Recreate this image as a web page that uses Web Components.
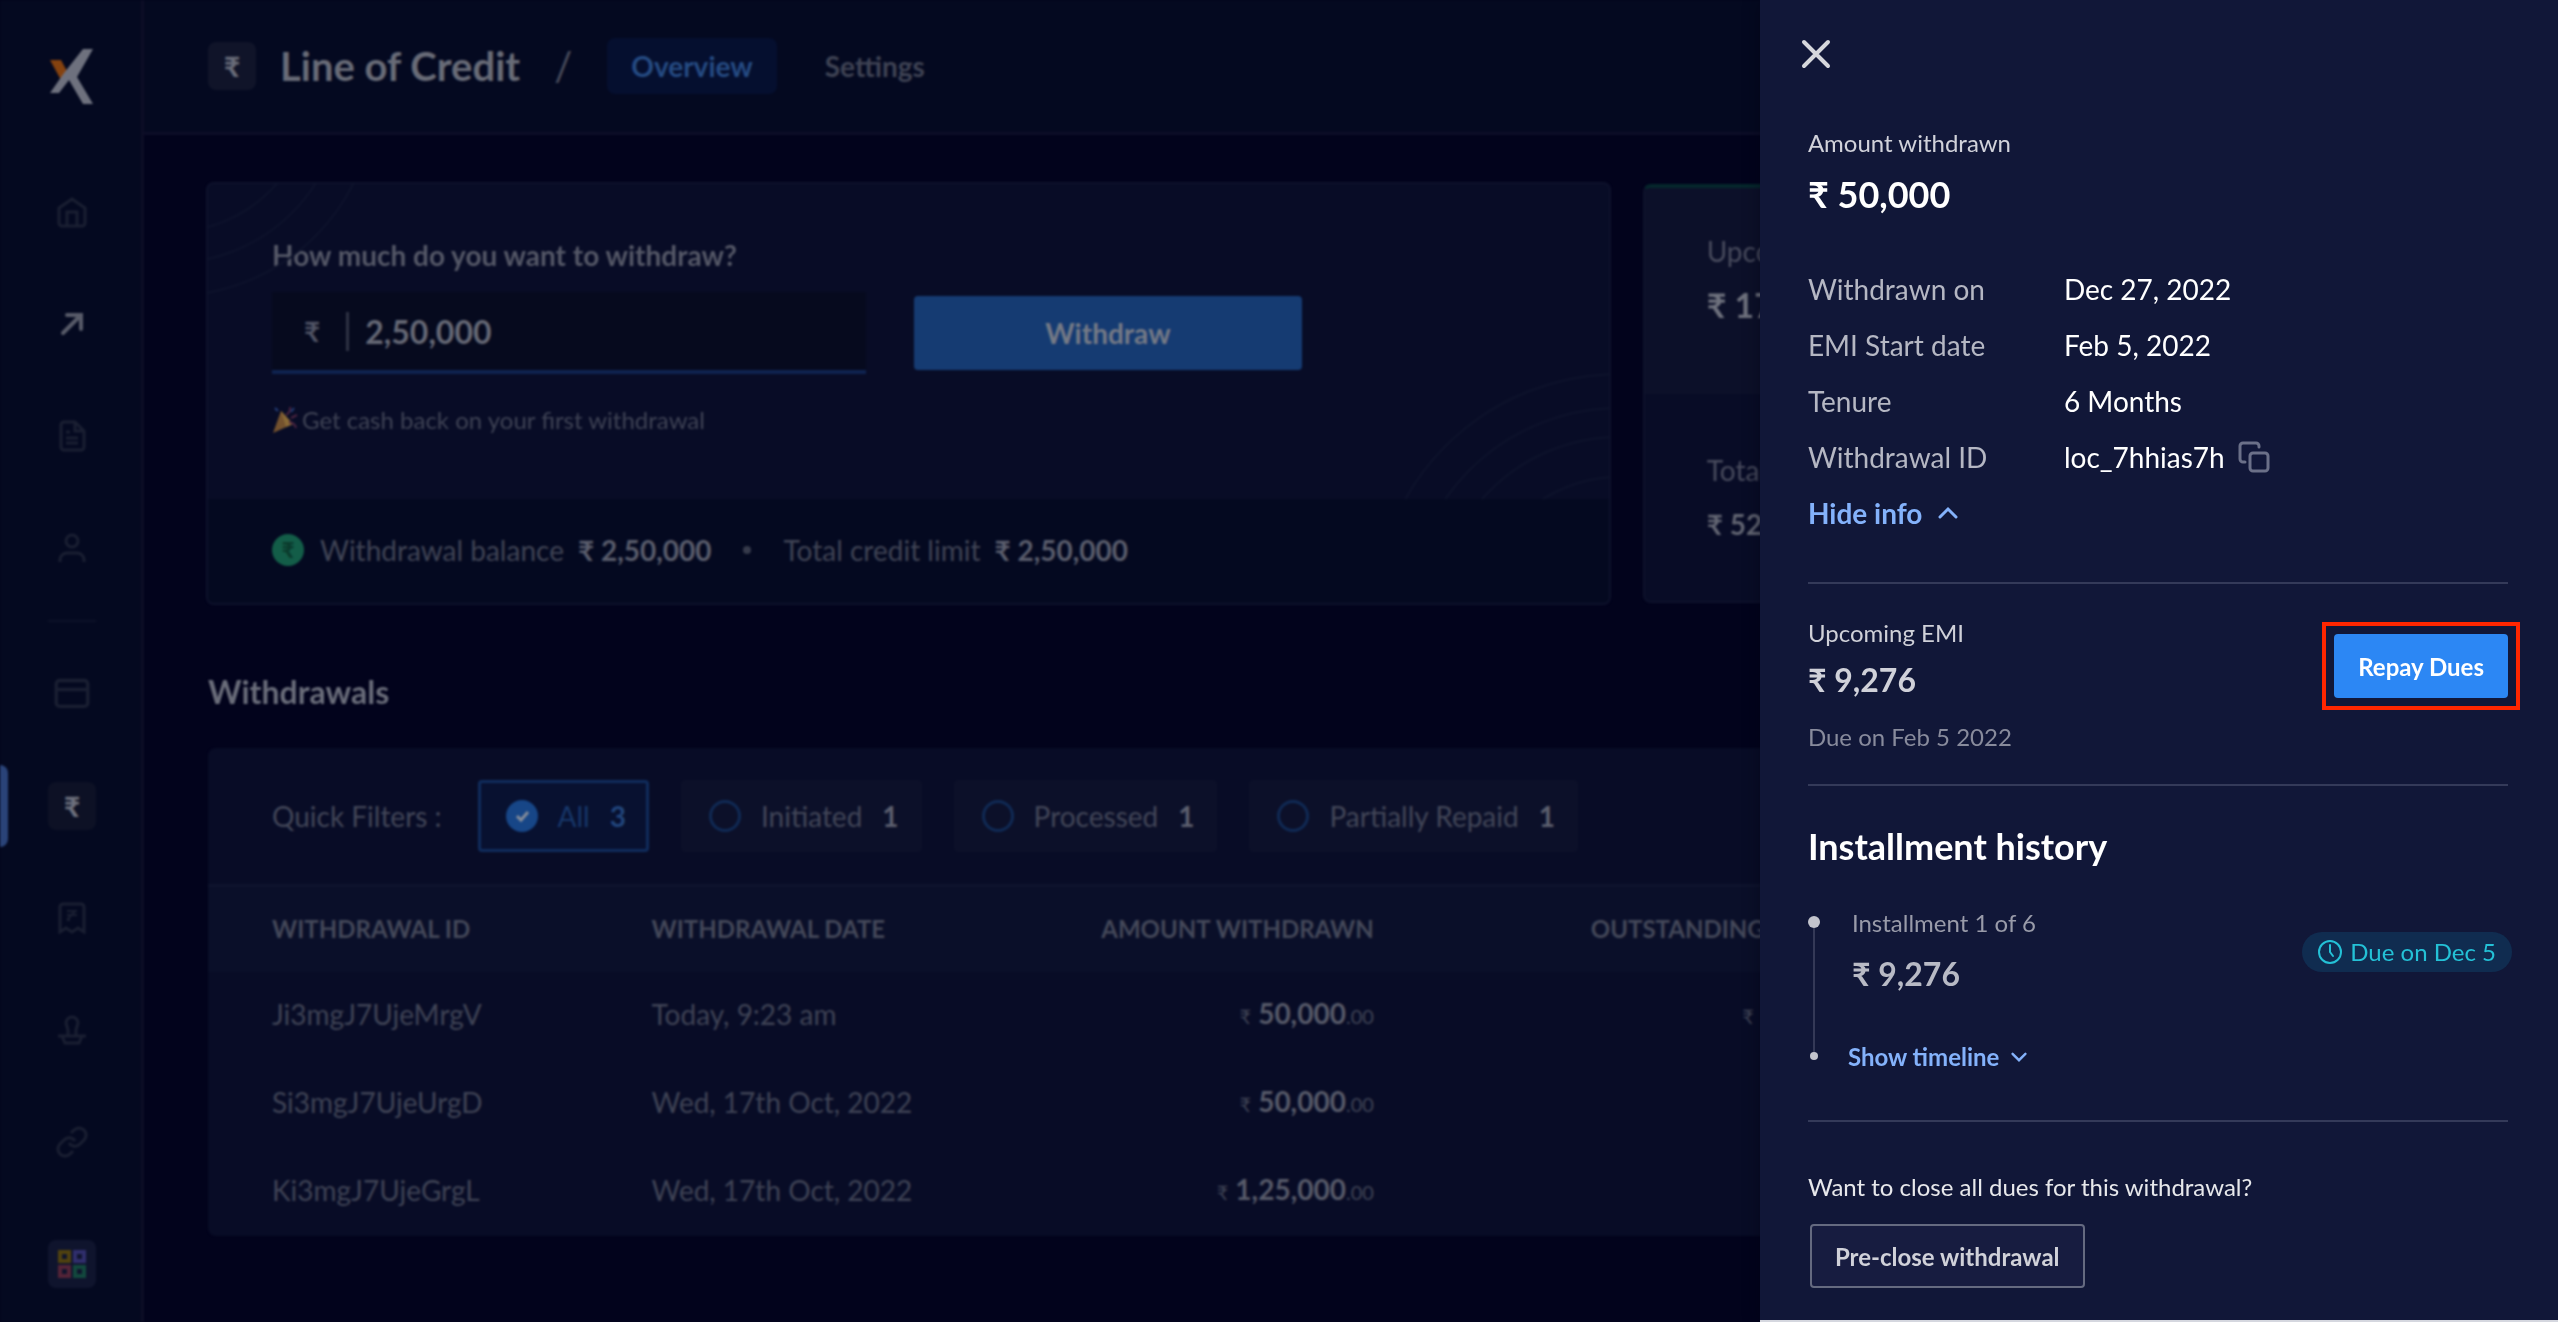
<!DOCTYPE html>
<html lang="en">
<head>
<meta charset="utf-8">
<meta name="viewport" content="width=device-width, initial-scale=1">
<title>Line of Credit</title>
<style>
html, body { margin: 0; }
body {
  background-color: #02031c;
  color: #fff;
  font: 28px/40px Lato, "Liberation Sans", sans-serif;
  overflow: hidden;
}
</style>
</head>
<body>
<credit-app>
  <side-nav slot="nav"></side-nav>
  <page-header slot="header">Line of Credit</page-header>
  <withdraw-card slot="summary"></withdraw-card>
  <dues-card slot="summary"></dues-card>
  <withdrawal-list>
    <quick-filters slot="filters"></quick-filters>
  </withdrawal-list>
</credit-app>

<detail-drawer>
  <section-block>
    <span slot="label">Amount withdrawn</span>
    <span slot="title">₹ 50,000</span>
    <info-row label="Withdrawn on">Dec 27, 2022</info-row>
    <info-row label="EMI Start date">Feb 5, 2022</info-row>
    <info-row label="Tenure">6 Months</info-row>
    <info-row label="Withdrawal ID" copy>loc_7hhias7h</info-row>
    <toggle-link open>Hide info</toggle-link>
  </section-block>
  <upcoming-emi></upcoming-emi>
  <installment-history></installment-history>
  <preclose-block></preclose-block>
</detail-drawer>

<script>
const define = (tagName, html, setup) => {
  const template = document.createElement('template')
  template.innerHTML = html

  customElements.define(tagName, class extends HTMLElement {
    constructor () {
      super()
      this.attachShadow({ mode: 'open' })
      this.shadowRoot.appendChild(template.content.cloneNode(true))
    }

    connectedCallback () {
      if (setup) setup(this, this.shadowRoot)
    }
  })
}

// Page frame behind the drawer
define('credit-app', `
<style>
:host {
  display: flex;
  filter: blur(1px);
  min-height: 100vh;
}
.page { display: flex; flex: 1; flex-direction: column; min-width: 0; }
main { padding: 47px 64px 0; }
.summary { display: grid; gap: 32px; grid-template-columns: 1.65fr 1fr; margin-left: -2px; }
</style>
<slot name="nav"></slot>
<div class="page">
  <slot name="header"></slot>
  <main>
    <div class="summary"><slot name="summary"></slot></div>
    <slot></slot>
  </main>
</div>
`)

define('side-nav', `
<style>
:host {
  background-color: #040920;
  border-right: 3px solid #0d0d26;
  box-sizing: border-box;
  display: block;
  flex: none;
  width: 144px;
}
.logo { display: block; height: 60px; margin: 47px auto 81px 49px; width: 46px; }
nav { display: flex; flex-direction: column; gap: 64px; }
a {
  align-items: center;
  border-radius: 8px;
  color: #1a1f32;
  display: flex;
  height: 48px;
  justify-content: center;
  margin-left: 48px;
  width: 48px;
}
a svg { fill: none; height: 32px; stroke: currentColor; stroke-width: 3; width: 32px; }
a.bright { color: #585b69; }
a.active { background-color: #0d1125; color: #6c6f7c; font-size: 28px; font-weight: 900; position: relative; text-decoration: none; }
a.active::before {
  background-color: #2a4378;
  border-radius: 0 8px 8px 0;
  content: '';
  height: 82px;
  left: -48px;
  position: absolute;
  top: -17px;
  width: 8px;
}
a.apps { background-color: #0f142d; margin-top: 10px; }
hr { background-color: #0d1228; border: 0; height: 2px; margin: 48px 0 48px 48px; width: 48px; }
</style>
<svg class="logo" viewBox="0 0 46 60">
  <path d="M1 13h11l7 13-6 9z" fill="#85420f"/>
  <path d="M34 2h10L28 30l16 27H34L20 33 10 46H1l14-20z" fill="#6e717e"/>
</svg>
<nav aria-label="Primary">
  <a href="#home" aria-label="Home"><svg viewBox="0 0 32 32"><path d="M3 12L16 3l13 9v15a3 3 0 0 1-3 3H6a3 3 0 0 1-3-3z"/><path d="M11 29V16h10v13" /></svg></a>
  <a href="#payouts" class="bright" aria-label="Payouts"><svg viewBox="0 0 32 32" stroke-linecap="round"><path d="M7 25L24 8M11 7h14v14" style="stroke-width: 4"/></svg></a>
  <a href="#invoices" aria-label="Invoices"><svg viewBox="0 0 32 32"><path d="M19 2H8a3 3 0 0 0-3 3v22a3 3 0 0 0 3 3h17a3 3 0 0 0 3-3V11zM19 2v9h9M10 12h4M10 18h12M10 23h12"/></svg></a>
  <a href="#contacts" aria-label="Contacts"><svg viewBox="0 0 32 32"><circle cx="16" cy="9" r="6"/><path d="M4 30v-2a7 7 0 0 1 7-7h10a7 7 0 0 1 7 7v2"/></svg></a>
</nav>
<hr>
<nav aria-label="Banking">
  <a href="#cards" aria-label="Cards"><svg viewBox="0 0 32 32" style="width: 36px; height: 36px"><rect x="2" y="4" width="28" height="23" rx="3"/><path d="M2 12h28"/></svg></a>
  <a href="#credit" class="active" aria-label="Line of credit">₹</a>
  <a href="#tax" aria-label="Tax payments"><svg viewBox="0 0 32 32"><path d="M4 30V5a3 3 0 0 1 3-3h18a3 3 0 0 1 3 3v25l-6-4-6 4-6-4z"/><path d="M11 9h10M11 13h10M11 18l8-9M11 18h3" stroke-width="2"/></svg></a>
  <a href="#approvals" aria-label="Approvals"><svg viewBox="0 0 32 32"><path d="M12 22v-6l-2-7a6 6 0 0 1 12 0l-2 7v6M2 22h28M6 22l3 7h14l3-7"/></svg></a>
  <a href="#links" aria-label="Payout links"><svg viewBox="0 0 32 32"><path d="M13 17a7 7 0 0 0 11 1l4-4a7 7 0 0 0-10-10l-3 3"/><path d="M19 15a7 7 0 0 0-11-1l-4 4a7 7 0 0 0 10 10l3-3"/></svg></a>
  <a href="#apps" class="apps" aria-label="All apps"><svg viewBox="0 0 32 32" style="stroke-width: 4"><path d="M4 4h9v9H4z" stroke="#51420f"/><path d="M19 4h9v9h-9z" stroke="#302e6c"/><path d="M4 19h9v9H4z" stroke="#542337"/><path d="M19 19h9v9h-9z" stroke="#12483d"/></svg></a>
</nav>
`)

define('page-header', `
<style>
:host {
  align-items: center;
  background-color: #040920;
  border-bottom: 3px solid #0d0d28;
  box-sizing: border-box;
  display: flex;
  height: 135px;
  padding: 0 64px;
}
.badge {
  background-color: #101429;
  border-radius: 8px;
  color: #686b78;
  flex: none;
  font-weight: 900;
  height: 48px;
  line-height: 48px;
  text-align: center;
  width: 48px;
}
h1 { color: #686b77; font-size: 40px; font-weight: 700; line-height: 48px; margin: 0 0 0 24px; }
.slash { color: #484b5b; font-size: 40px; margin: 0 35px 0 34px; }
nav { display: flex; gap: 24px; }
a { border-radius: 8px; color: #3f4354; font-weight: 700; padding: 8px 24px; text-decoration: none; }
a[aria-current] { background-color: #050f2f; color: #254b83; }
</style>
<span class="badge">₹</span>
<h1><slot></slot></h1>
<span class="slash">/</span>
<nav>
  <a href="#overview" aria-current="page">Overview</a>
  <a href="#settings">Settings</a>
</nav>
`)

define('withdraw-card', `
<style>
:host {
  background-color: #080c26;
  border: 2px solid #0e122c;
  border-radius: 8px;
  display: block;
  overflow: hidden;
}
form { padding: 51px 64px 63px; position: relative; }
.arcs { fill: none; position: absolute; stroke: #0e132c; stroke-width: 2; }
.top { left: 0; top: 0; }
.bottom { bottom: 0; right: 0; }
label { color: #555867; display: block; font-weight: 700; }
.row { align-items: center; display: flex; gap: 48px; margin: 17px 0 30px; position: relative; }
.field {
  align-items: center;
  background-color: #060a1e;
  border-bottom: 4px solid #0f2350;
  box-sizing: border-box;
  color: #505364;
  display: flex;
  flex: 0 1 594px;
  height: 82px;
  padding: 0 32px;
}
.field span { font-weight: 700; }
input {
  background: none;
  border: 0;
  border-left: 3px solid #2e3243;
  color: #656875;
  flex: 1;
  font: 700 32px/32px Lato, sans-serif;
  margin-left: 26px;
  min-width: 0;
  outline: none;
  padding: 0 0 0 16px;
}
button {
  background-color: #153b72;
  border: 0;
  border-radius: 4px;
  color: #757a86;
  flex: 0 1 388px;
  font: 700 28px/40px Lato, sans-serif;
  height: 74px;
}
.offer { align-items: center; color: #3f4355; display: flex; font-size: 24px; gap: 4px; line-height: 32px; margin: 0; }
footer {
  align-items: center;
  background-color: #040920;
  box-sizing: border-box;
  color: #404455;
  display: flex;
  height: 104px;
  padding: 0 64px 2px;
}
.coin { background-color: #135d48; border-radius: 50%; color: #0a3a2c; font-size: 22px; font-weight: 900; height: 32px; line-height: 32px; margin-right: 16px; text-align: center; width: 32px; }
b { color: #5a5d6c; margin-left: 14px; }
.dot { background-color: #363a4b; border-radius: 50%; height: 8px; margin: 0 32px; width: 8px; }
</style>
<form>
  <svg class="arcs top" width="200" height="160"><circle cx="-37" cy="-92" r="140"/><circle cx="-37" cy="-92" r="171"/><circle cx="-37" cy="-92" r="204"/></svg>
  <svg class="arcs bottom" width="240" height="140"><circle cx="250" cy="260" r="245"/><circle cx="250" cy="260" r="211"/><circle cx="250" cy="260" r="182"/><circle cx="250" cy="260" r="142"/></svg>
  <label for="amount">How much do you want to withdraw?</label>
  <div class="row">
    <div class="field"><span>₹</span><input id="amount" type="text" inputmode="numeric" value="2,50,000"></div>
    <button type="button">Withdraw</button>
  </div>
  <p class="offer">
    <svg width="26" height="28" viewBox="0 0 26 28"><path d="M9 5l12 13L1 27z" fill="#74522e"/><path d="M9 5l12 13-7 3z" fill="#8a6a36"/><path d="M14 9q5-3 4-8M19 12l6-3M17 16q6 1 7 6" fill="none" stroke="#4c2440" stroke-width="2"/><path d="M3 2l3 3M22 2l-3 4" stroke="#243f78" stroke-width="2"/></svg>
    Get cash back on your first withdrawal
  </p>
</form>
<footer>
  <span class="coin">₹</span>
  <span>Withdrawal balance</span><b>₹ 2,50,000</b>
  <span class="dot"></span>
  <span>Total credit limit</span><b>₹ 2,50,000</b>
</footer>
`)

define('dues-card', `
<style>
:host {
  background-color: #080c26;
  border: 2px solid #0e122c;
  border-radius: 8px;
  border-top: 4px solid #05272c;
  box-sizing: border-box;
  color: #484b5d;
  display: block;
  margin: 2px 0;
  overflow: hidden;
}
div { padding: 43px 62px 0; }
.next { background-color: #0c1029; box-sizing: border-box; height: 206px; }
.total { padding-top: 56px; }
p { margin: 0 0 14px; }
b { color: #626572; display: block; font-size: 28px; }
.next b { color: #6e717d; font-size: 34px; }
</style>
<div class="next"><p>Upcoming</p><b>₹ 17</b></div>
<div class="total"><p>Total</p><b>₹ 52</b></div>
`)

define('quick-filters', `
<style>
:host { align-items: center; display: flex; gap: 32px; padding: 32px 64px; }
label {
  align-items: center;
  background-color: #0c1029;
  border: 3px solid #0c1029;
  border-radius: 4px;
  box-sizing: border-box;
  color: #424658;
  display: flex;
  gap: 20px;
  height: 72px;
  padding: 0 20px 0 25px;
}
label:has(:checked) { background-color: #081130; border-color: #102c5c; color: #17376a; }
b { color: #5c5f6e; }
:checked ~ b { color: #21457c; }
input {
  appearance: none;
  border: 3px solid #102a55;
  border-radius: 50%;
  box-sizing: border-box;
  height: 32px;
  margin: 0;
  width: 32px;
}
input:checked {
  background: #174687 url("data:image/svg+xml,%3Csvg xmlns='http://www.w3.org/2000/svg' viewBox='0 0 26 26'%3E%3Cpath d='M8 13l4 4 7-8' fill='none' stroke='%23848c9a' stroke-width='3'/%3E%3C/svg%3E") center;
  border-color: #174687;
}
.title { color: #424658; margin-right: 4px; }
</style>
<span class="title">Quick Filters :</span>
<label><input type="radio" name="status" checked><span>All</span><b>3</b></label>
<label><input type="radio" name="status"><span>Initiated</span><b>1</b></label>
<label><input type="radio" name="status"><span>Processed</span><b>1</b></label>
<label><input type="radio" name="status"><span>Partially Repaid</span><b>1</b></label>
`)

define('withdrawal-list', `
<style>
h2 { color: #6a6d7a; font-size: 32px; line-height: 40px; margin: 67px 0 36px; }
section { background-color: #080c26; border-radius: 8px; overflow: hidden; }
table { border-collapse: collapse; color: #3f4355; table-layout: fixed; width: 100%; }
tr { height: 88px; }
th, td { padding: 0; text-align: left; white-space: nowrap; }
thead tr { background-color: #0a0f29; box-shadow: inset 0 3px #0e132d; }
th { color: #444859; font-size: 24px; font-weight: 700; padding-top: 2px; }
td { padding-bottom: 4px; }
th:first-child, td:first-child { padding-left: 64px; }
.amount { text-align: right; }
.outstanding { padding-left: 217px; }
small { font-size: 20px; }
b { color: #575a69; }
</style>
<h2>Withdrawals</h2>
<section>
  <slot name="filters"></slot>
  <table>
    <colgroup><col style="width: 19.4%"><col style="width: 15.3%"><col style="width: 16.3%"><col style="width: 22%"><col></colgroup>
    <thead>
      <tr><th>WITHDRAWAL ID</th><th>WITHDRAWAL DATE</th><th class="amount">AMOUNT WITHDRAWN</th><th class="outstanding">OUTSTANDING</th><th></th></tr>
    </thead>
    <tbody>
      <tr><td>Ji3mgJ7UjeMrgV</td><td>Today, 9:23 am</td><td class="amount"><small>₹</small> <b>50,000</b><small>.00</small></td><td class="amount"><small>₹</small> <b>50,000</b><small>.00</small></td><td></td></tr>
      <tr><td>Si3mgJ7UjeUrgD</td><td>Wed, 17th Oct, 2022</td><td class="amount"><small>₹</small> <b>50,000</b><small>.00</small></td><td></td><td></td></tr>
      <tr><td>Ki3mgJ7UjeGrgL</td><td>Wed, 17th Oct, 2022</td><td class="amount"><small>₹</small> <b>1,25,000</b><small>.00</small></td><td></td><td></td></tr>
    </tbody>
  </table>
</section>
`)

// Drawer on the right edge, over the page
define('detail-drawer', `
<style>
:host {
  background-color: #111738;
  border-bottom: 2px solid #d5d7df;
  bottom: 0;
  box-shadow: 0 0 16px rgba(0, 0, 16, 0.4);
  box-sizing: border-box;
  display: block;
  overflow: hidden;
  padding: 38px 50px 0 48px;
  position: fixed;
  right: 0;
  top: 0;
  width: 31.2%;
}
button { background: none; border: 0; display: block; height: 32px; margin: 0 0 57px -8px; padding: 0; width: 32px; }
svg { display: block; }
</style>
<button type="button" aria-label="Close"><svg width="32" height="32" viewBox="0 0 32 32" fill="none" stroke="#d6d7dc" stroke-width="4" stroke-linecap="round"><path d="M4 4l24 24M28 4L4 28"/></svg></button>
<slot></slot>
`)

define('section-block', `
<style>
:host { border-bottom: 2px solid #343a59; display: block; padding-bottom: 49px; }
.label { color: #d1d2da; font-size: 24px; line-height: 32px; }
.title { font-size: 36px; font-weight: 700; line-height: 48px; margin: 11px 0 51px; }
.rows { display: flex; flex-direction: column; gap: 16px; }
</style>
<div class="label"><slot name="label"></slot></div>
<div class="title"><slot name="title"></slot></div>
<div class="rows"><slot></slot></div>
`)

define('info-row', `
<style>
:host { align-items: center; display: flex; }
.label { color: #b5b7c3; flex: none; width: 256px; }
button { background: none; border: 0; height: 32px; margin-left: 13px; padding: 0; width: 32px; }
button[hidden] { display: none; }
svg { display: block; }
</style>
<span class="label"></span>
<slot></slot>
<button type="button" aria-label="Copy" hidden><svg width="32" height="32" viewBox="0 0 32 32" fill="none" stroke="#6b7088" stroke-width="3" stroke-linecap="round"><rect x="12" y="12" width="18" height="18" rx="3"/><path d="M7 21H5a3 3 0 0 1-3-3V5a3 3 0 0 1 3-3h13a3 3 0 0 1 3 3v1"/></svg></button>
`, (el, root) => {
  root.querySelector('.label').textContent = el.getAttribute('label')
  root.querySelector('button').hidden = !el.hasAttribute('copy')
})

define('toggle-link', `
<style>
:host { display: block; }
button {
  align-items: center;
  background: none;
  border: 0;
  color: #84b2fb;
  display: flex;
  font: inherit;
  font-weight: 700;
  gap: 12px;
  padding: 0;
}
:host([open]) button { gap: 16px; }
:host([open]) svg { height: 20px; transform: rotate(180deg); width: 20px; }
</style>
<button type="button"><slot></slot><svg width="16" height="16" viewBox="0 0 20 20" fill="none" stroke="currentColor" stroke-width="3" stroke-linecap="round"><path d="M2 6l8 8 8-8"/></svg></button>
`)

define('upcoming-emi', `
<style>
:host {
  align-items: flex-start;
  border-bottom: 2px solid #343a59;
  display: flex;
  font-size: 24px;
  justify-content: space-between;
  line-height: 32px;
  padding: 33px 0 31px;
}
p { color: #cfd0d8; margin: 0; }
b { color: #d0d1d9; display: block; font-size: 32px; line-height: 40px; margin: 11px 0 21px; }
.due { color: #888b9c; }
.highlight { border: 4px solid #ff2600; margin: 5px -12px 0 0; padding: 8px; }
button { background-color: #2c87f4; border: 0; border-radius: 4px; color: #fff; display: block; font: 700 24px/32px Lato, sans-serif; height: 64px; padding: 2px 24px 0; }
</style>
<div><p>Upcoming EMI</p><b>₹ 9,276</b><p class="due">Due on Feb 5 2022</p></div>
<div class="highlight"><button type="button">Repay Dues</button></div>
`)

define('installment-history', `
<style>
:host { border-bottom: 2px solid #343a59; display: block; font-size: 24px; line-height: 32px; padding: 36px 0 47px; }
h2 { font-size: 36px; line-height: 48px; margin: 0 0 37px; }
.item { display: flex; gap: 32px; }
.rail { align-items: center; display: flex; flex-direction: column; padding: 9px 0 13px; width: 12px; }
.rail i { background-color: #c3c4cd; border-radius: 50%; height: 12px; width: 12px; }
.rail i:last-child { height: 8px; width: 8px; }
.rail span { background-color: #343957; flex: 1; width: 2px; }
.body { flex: 1; }
p { color: #999ba9; margin: 0 0 15px; }
b { color: #b8bac5; display: block; font-size: 32px; line-height: 40px; margin-bottom: 47px; }
toggle-link { margin-left: -4px; }
.chip {
  align-items: center;
  background-color: #102c50;
  border-radius: 20px;
  color: #24c1d6;
  display: flex;
  gap: 8px;
  height: 40px;
  margin: 25px -4px 0 0;
  padding: 0 16px;
}
</style>
<h2>Installment history</h2>
<div class="item">
  <div class="rail"><i></i><span></span><i></i></div>
  <div class="body">
    <p>Installment 1 of 6</p>
    <b>₹ 9,276</b>
    <toggle-link>Show timeline</toggle-link>
  </div>
  <span class="chip"><svg width="24" height="24" viewBox="0 0 24 24" fill="none" stroke="currentColor" stroke-width="2" stroke-linecap="round"><circle cx="12" cy="12" r="11"/><path d="M12 5v7l3 4"/></svg>Due on Dec 5</span>
</div>
`)

define('preclose-block', `
<style>
:host { display: block; font-size: 24px; line-height: 32px; padding-top: 49px; }
p { color: #e7e8eb; margin: 0 0 21px; }
button {
  background-color: #171c40;
  border: 2px solid #656a80;
  border-radius: 4px;
  color: #d0d1d9;
  font: 700 24px/32px Lato, sans-serif;
  height: 64px;
  margin-left: 2px;
  padding: 2px 23px 0;
}
</style>
<p>Want to close all dues for this withdrawal?</p>
<button type="button">Pre-close withdrawal</button>
`)
</script>
</body>
</html>
